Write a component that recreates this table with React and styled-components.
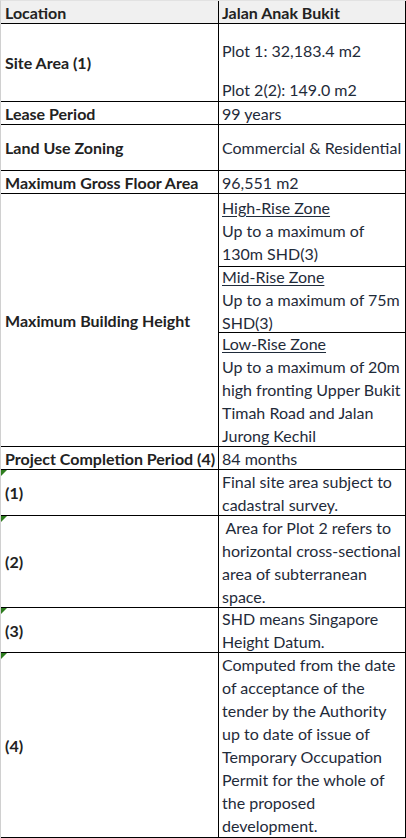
import React from "react";
import styled, { createGlobalStyle } from "styled-components";

const GlobalStyle = createGlobalStyle`
  html, body {
    margin: 0;
    padding: 0;
    background: #ffffff;
  }
  body {
    font-family: Lato, "Open Sans", "Liberation Sans", sans-serif;
    color: #222222;
    overflow: hidden;
  }
`;

const zones = [
  { title: "High-Rise Zone", lines: ["Up to a maximum of", "130m SHD(3)"], h: 73 },
  { title: "Mid-Rise Zone", lines: ["Up to a maximum of 75m", "SHD(3)"], h: 66 },
  {
    title: "Low-Rise Zone",
    lines: ["Up to a maximum of 20m", "high fronting Upper Bukit", "Timah Road and Jalan", "Jurong Kechil"],
    h: 114,
  },
];

const notes = [
  { label: "(1)", lines: ["Final site area subject to", "cadastral survey."], h: 46 },
  {
    label: "(2)",
    lines: ["\u00a0Area for Plot 2 refers to", "horizontal cross-sectional", "area of subterranean", "space."],
    h: 92,
  },
  { label: "(3)", lines: ["SHD means Singapore", "Height Datum."], h: 45 },
  {
    label: "(4)",
    lines: [
      "Computed from the date",
      "of acceptance of the",
      "tender by the Authority",
      "up to date of issue of",
      "Temporary Occupation",
      "Permit for the whole of",
      "the proposed",
      "development.",
    ],
    h: 185,
  },
];

export default function App() {
  return (
    <>
      <GlobalStyle />
      <Sheet>
        <Label $head $h={23}>Location</Label>
        <Value $head $h={23}>Jalan Anak Bukit</Value>

        <Label $h={78}>Site Area (1)</Label>
        <SiteValue $h={78}>
          <Line>Plot 1: 32,183.4 m2</Line>
          <Line>Plot 2(2): 149.0 m2</Line>
        </SiteValue>

        <Label $h={23}>Lease Period</Label>
        <Value $h={23}>99 years</Value>

        <Label $h={46}>Land Use Zoning</Label>
        <Value $h={46}>Commercial &amp; Residential</Value>

        <Label $h={23}>Maximum Gross Floor Area</Label>
        <Value $h={23}>96,551 m2</Value>

        <Label $span={3}>Maximum Building Height</Label>
        {zones.map((z) => (
          <Value key={z.title} $h={z.h}>
            <ZoneTitle>{z.title}</ZoneTitle>
            {z.lines.map((l) => (
              <Line key={l}>{l}</Line>
            ))}
          </Value>
        ))}

        <Label $h={23}>Project Completion Period (4)</Label>
        <Value $h={23}>84 months</Value>

        {notes.map((n) => (
          <React.Fragment key={n.label}>
            <Label $h={n.h}>
              <CommentMark />
              {n.label}
            </Label>
            <Value $h={n.h}>
              {n.lines.map((l) => (
                <Line key={l}>{l}</Line>
              ))}
            </Value>
          </React.Fragment>
        ))}
      </Sheet>
    </>
  );
}

const Sheet = styled.div`
  display: grid;
  grid-template-columns: 218px 187px;
  width: 405px;
  height: 837px;
  border-left: 1px solid #d0d0d0;
  border-top: 1px solid #e2e2e2;
  font-size: 16px;
  line-height: 23px;
`;

const Cell = styled.div`
  position: relative;
  box-sizing: border-box;
  ${(p) => (p.$h ? `height: ${p.$h}px;` : "")}
  ${(p) => (p.$span ? `grid-row: span ${p.$span};` : "")}
  border-right: 1px solid #000;
  border-bottom: 1px solid #000;
  background: ${(p) => (p.$head ? "#f0f0f0" : "#ffffff")};
  white-space: nowrap;
  overflow: hidden;
`;

const Label = styled(Cell)`
  display: flex;
  align-items: center;
  padding-left: 4px;
  font-weight: 700;
  color: #222222;
`;

const Value = styled(Cell)`
  display: flex;
  flex-direction: column;
  justify-content: center;
  padding-left: 3px;
  font-weight: ${(p) => (p.$head ? 700 : 400)};
  color: ${(p) => (p.$head ? "#222222" : "#1f2b3a")};
`;

const SiteValue = styled(Value)`
  justify-content: flex-end;
  gap: 16px;
`;

const Line = styled.div`
  height: 23px;
`;

const ZoneTitle = styled(Line)`
  text-decoration: underline;
  text-underline-offset: 2px;
`;

const CommentMark = styled.span`
  position: absolute;
  top: 0;
  left: 0;
  width: 0;
  height: 0;
  border-top: 6px solid #2e7d1f;
  border-right: 6px solid transparent;
`;
